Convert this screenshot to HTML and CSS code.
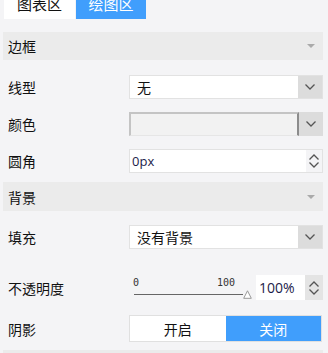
FILE: index.html
```html
<!DOCTYPE html>
<html lang="zh-CN">
<head>
    <meta charset="UTF-8">
    <meta name="viewport" content="width=device-width, initial-scale=1.0">
    <title>绘图区设置</title>
    <link rel="stylesheet" href="styles.css">
</head>
<body>
    <div class="tabs">
        <div class="tab">图表区</div>
        <div class="tab active">绘图区</div>
    </div>

    <div class="panel">
        <div class="section-header">
            <span>边框</span>
            <span class="caret"></span>
        </div>

        <div class="row first">
            <label>线型</label>
            <div class="select">
                <span class="value">无</span>
                <span class="arrow-btn"><svg width="12" height="8" viewBox="0 0 12 8"><path d="M1.5 1.5 L6 6 L10.5 1.5" fill="none" stroke="#555" stroke-width="1.3"/></svg></span>
            </div>
        </div>

        <div class="row">
            <label>颜色</label>
            <div class="select color">
                <span class="swatch"></span>
                <span class="arrow-btn"><svg width="12" height="8" viewBox="0 0 12 8"><path d="M1.5 1.5 L6 6 L10.5 1.5" fill="none" stroke="#555" stroke-width="1.3"/></svg></span>
            </div>
        </div>

        <div class="row">
            <label>圆角</label>
            <div class="number">
                <span class="value small">0px</span>
                <span class="spinner">
                    <svg width="12" height="8" viewBox="0 0 12 8"><path d="M1.5 6.5 L6 2 L10.5 6.5" fill="none" stroke="#555" stroke-width="1.3"/></svg>
                    <svg width="12" height="8" viewBox="0 0 12 8"><path d="M1.5 1.5 L6 6 L10.5 1.5" fill="none" stroke="#555" stroke-width="1.3"/></svg>
                </span>
            </div>
        </div>

        <div class="section-header second">
            <span>背景</span>
            <span class="caret"></span>
        </div>

        <div class="row fill-row">
            <label>填充</label>
            <div class="select">
                <span class="value">没有背景</span>
                <span class="arrow-btn"><svg width="12" height="8" viewBox="0 0 12 8"><path d="M1.5 1.5 L6 6 L10.5 1.5" fill="none" stroke="#555" stroke-width="1.3"/></svg></span>
            </div>
        </div>

        <div class="row opacity-row">
            <label>不透明度</label>
            <div class="slider">
                <div class="scale">
                    <span>0</span>
                    <span>100</span>
                </div>
                <div class="track">
                    <svg class="thumb" width="9" height="9" viewBox="0 0 9 9"><path d="M4.5 0.8 L8.3 8.3 L0.7 8.3 Z" fill="#fff" stroke="#999" stroke-width="1"/></svg>
                </div>
            </div>
            <div class="number pct">
                <span class="value">100%</span>
                <span class="spinner grey">
                    <svg width="12" height="8" viewBox="0 0 12 8"><path d="M1.5 6.5 L6 2 L10.5 6.5" fill="none" stroke="#555" stroke-width="1.3"/></svg>
                    <svg width="12" height="8" viewBox="0 0 12 8"><path d="M1.5 1.5 L6 6 L10.5 1.5" fill="none" stroke="#555" stroke-width="1.3"/></svg>
                </span>
            </div>
        </div>

        <div class="row shadow-row">
            <label>阴影</label>
            <div class="toggle">
                <span class="opt">开启</span>
                <span class="opt on">关闭</span>
            </div>
        </div>

        <div class="section-header bottom"></div>
    </div>
</body>
</html>
```

FILE: styles.css
```css
body {
    margin: 0;
    background-color: #f4f4f6;
    font-family: "Noto Sans CJK SC", "Noto Sans", sans-serif;
    font-size: 14px;
    color: #222;
    overflow: hidden;
}
.tabs {
    display: flex;
    margin-top: -11px;
    padding-left: 4px;
    gap: 1px;
}
.tab {
    width: 71px;
    height: 30px;
    line-height: 30px;
    text-align: center;
    font-size: 15px;
    background-color: #fff;
    color: #111;
}
.tab.active {
    width: 70px;
    background-color: #409efc;
    color: #fff;
}
.panel {
    padding: 0 5px 0 3px;
}
.section-header {
    display: flex;
    justify-content: space-between;
    align-items: center;
    height: 28px;
    margin-top: 13px;
    padding: 0 8px 0 5px;
    background-color: #ebebeb;
    font-size: 14px;
    color: #111;
}
.section-header.second {
    margin-top: 9px;
    height: 29px;
}
.section-header.bottom {
    margin-top: 8px;
    height: 30px;
}
.caret {
    width: 0;
    height: 0;
    border-left: 4px solid transparent;
    border-right: 4px solid transparent;
    border-top: 4px solid #aaa;
}
.row {
    display: flex;
    align-items: center;
    height: 24px;
    margin-top: 13px;
    padding-left: 5px;
}
.row.first {
    margin-top: 15px;
}
.row.fill-row {
    margin-top: 14px;
}
.row.opacity-row {
    height: 25px;
    margin-top: 26px;
}
.row.shadow-row {
    height: 27px;
    margin-top: 15px;
}
.row label {
    width: 121px;
    flex-shrink: 0;
    color: #111;
}
.select,
.number {
    flex: 1;
    display: flex;
    height: 100%;
    background-color: #fff;
    border: 1px solid #e2e2e2;
    box-sizing: border-box;
}
.value {
    flex: 1;
    display: flex;
    align-items: center;
    padding-left: 7px;
    color: #111;
}
.value.small {
    font-family: "Open Sans", "Noto Sans", sans-serif;
    font-size: 13px;
    padding-left: 2px;
    color: #1c1c4a;
}
.arrow-btn {
    width: 24px;
    display: flex;
    align-items: center;
    justify-content: center;
    background-color: #dcdcdc;
}
.select.color {
    border: none;
}
.swatch {
    flex: 1;
    background-color: #f2f2f2;
    border-top: 2px solid #c4c4c4;
    border-left: 2px solid #c4c4c4;
    border-bottom: 1px solid #e6e6e6;
    border-right: 2px solid #8c8c8c;
}
.spinner {
    width: 16px;
    display: flex;
    flex-direction: column;
    justify-content: center;
    align-items: center;
    background-color: #f4f4f6;
}
.spinner.grey {
    width: 18px;
    background-color: #e4e4e4;
}
.slider {
    width: 122px;
    margin-right: 5px;
    height: 100%;
    display: flex;
    flex-direction: column;
}
.scale {
    display: flex;
    justify-content: space-between;
    padding: 2px 16px 0 4px;
    font-family: "DejaVu Sans Mono", monospace;
    font-size: 10px;
    line-height: 12px;
    color: #333;
}
.track {
    position: relative;
    width: 109px;
    height: 1px;
    margin-top: 5px;
    margin-left: 5px;
    background-color: #666;
}
.thumb {
    position: absolute;
    right: -9px;
    top: -4px;
}
.number.pct {
    border: none;
}
.number.pct .value {
    padding-left: 3px;
    font-family: "Open Sans", "Noto Sans", sans-serif;
    font-size: 14px;
    color: #1c1c4a;
}
.toggle {
    flex: 1;
    display: flex;
    height: 100%;
    border: 1px solid #e0e0e0;
    box-sizing: border-box;
    background-color: #fff;
    margin-right: 1px;
}
.opt {
    flex: 1;
    display: flex;
    align-items: center;
    justify-content: center;
    color: #111;
}
.opt.on {
    background-color: #409efc;
    color: #fff;
}
```
